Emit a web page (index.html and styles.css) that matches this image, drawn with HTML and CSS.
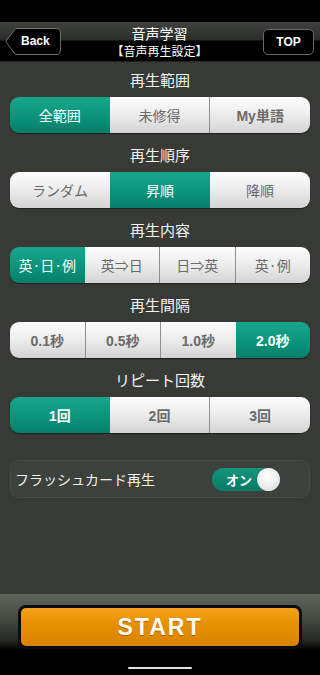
FILE: index.html
```html
<!DOCTYPE html>
<html lang="ja">
<head>
<meta charset="utf-8">
<title>音声学習</title>
<link rel="stylesheet" href="styles.css">
</head>
<body>
<div class="status"></div>
<header class="header">
  <div class="back">
    <svg class="back-shape" width="56" height="27" viewBox="0 0 56 27"><path d="M10.5 0.5 H51 Q55.5 0.5 55.5 5 V22 Q55.5 26.5 51 26.5 H10.5 L0.7 13.5 Z" fill="#000" stroke="#6d706b" stroke-width="1"/></svg>
    <span class="back-label">Back</span>
  </div>
  <div class="title">
    <div class="title-main">音声学習</div>
    <div class="title-sub">【音声再生設定】</div>
  </div>
  <div class="top-wrap"><div class="top">TOP</div></div>
</header>
<main class="main">
  <div class="label first">再生範囲</div>
  <div class="seg">
    <div class="opt on">全範囲</div>
    <div class="opt">未修得</div>
    <div class="opt num">My単語</div>
  </div>
  <div class="label">再生順序</div>
  <div class="seg">
    <div class="opt">ランダム</div>
    <div class="opt on">昇順</div>
    <div class="opt">降順</div>
  </div>
  <div class="label">再生内容</div>
  <div class="seg">
    <div class="opt on">英·日·例</div>
    <div class="opt">英⇒日</div>
    <div class="opt">日⇒英</div>
    <div class="opt">英·例</div>
  </div>
  <div class="label">再生間隔</div>
  <div class="seg">
    <div class="opt num">0.1秒</div>
    <div class="opt num">0.5秒</div>
    <div class="opt num">1.0秒</div>
    <div class="opt num on">2.0秒</div>
  </div>
  <div class="label">リピート回数</div>
  <div class="seg">
    <div class="opt num on">1回</div>
    <div class="opt num">2回</div>
    <div class="opt num">3回</div>
  </div>
  <div class="flash">
    <span class="flash-label">フラッシュカード再生</span>
    <div class="toggle"><span class="toggle-text">オン</span><span class="knob"></span></div>
  </div>
</main>
<footer class="footer">
  <div class="start">START</div>
  <div class="home"></div>
</footer>
</body>
</html>
```
FILE: styles.css
```css
html, body {
  margin: 0;
  padding: 0;
}
body {
  width: 320px;
  height: 675px;
  background: #373a35;
  display: flex;
  flex-direction: column;
  font-family: "Noto Sans CJK JP", "Noto Sans", sans-serif;
  overflow: hidden;
}
.status {
  height: 22px;
  background: #000;
  flex: none;
}
.header {
  flex: none;
  height: 39px;
  background: linear-gradient(to bottom, #3e413c 0, #2b2d29 18px, #000 19px, #000 100%);
  border-bottom: 1px solid #222;
  display: grid;
  grid-template-columns: 1fr auto 1fr;
  align-items: center;
  padding: 0 6px 0 5px;
}
.back {
  position: relative;
  width: 56px;
  height: 27px;
}
.back-shape {
  position: absolute;
  left: 0;
  top: 0;
}
.back-label {
  position: relative;
  display: block;
  line-height: 27px;
  padding-left: 16px;
  font-family: "Liberation Sans", sans-serif;
  font-weight: bold;
  font-size: 12px;
  color: #fff;
}
.title {
  text-align: center;
  color: #fff;
}
.title-main {
  font-size: 14px;
  line-height: 17px;
}
.title-sub {
  font-size: 12px;
  line-height: 17px;
}
.top-wrap {
  display: flex;
  justify-content: flex-end;
}
.top {
  width: 49px;
  height: 24px;
  border: 1px solid #666964;
  border-radius: 5px;
  background: #000;
  color: #fff;
  font-family: "Liberation Sans", sans-serif;
  font-weight: bold;
  font-size: 12px;
  line-height: 24px;
  text-align: center;
}
.main {
  flex: 1;
  padding: 0 10px;
}
.label {
  margin: 11px 0 6px;
  height: 22px;
  line-height: 22px;
  font-size: 15px;
  color: #f2f2f2;
  text-align: center;
}
.label.first {
  margin-top: 7px;
}
.seg {
  display: flex;
  height: 36px;
  border-radius: 9px;
  overflow: hidden;
  box-shadow: 0 1px 1px rgba(0, 0, 0, 0.45);
}
.opt {
  flex: 1;
  display: flex;
  align-items: center;
  justify-content: center;
  background: linear-gradient(to bottom, #fdfdfd 0%, #ececec 50%, #d3d3d3 100%);
  color: #6a6a6a;
  font-size: 14px;
  border-left: 1px solid #8f8f8f;
}
.opt:first-child {
  border-left: none;
}
.opt.num {
  font-family: "Liberation Sans", "Noto Sans CJK JP", sans-serif;
  font-weight: bold;
}
.opt.on {
  background: linear-gradient(to bottom, #1aa68d 0%, #0b957d 50%, #067f69 100%);
  color: #fff;
  border-left: none;
}
.opt.on + .opt {
  border-left: none;
}
.flash {
  margin-top: 27px;
  height: 36px;
  border: 1px solid #474b45;
  border-radius: 9px;
  background: #3d413b;
  display: flex;
  align-items: center;
  justify-content: space-between;
  padding: 0 29px 0 4px;
}
.flash-label {
  font-size: 14px;
  color: #f0f0f0;
}
.toggle {
  position: relative;
  width: 68px;
  height: 23px;
  border-radius: 12px;
  background: linear-gradient(to bottom, #14967c, #077a64);
  box-sizing: border-box;
}
.toggle-text {
  display: block;
  line-height: 23px;
  padding-left: 14px;
  color: #fff;
  font-size: 13px;
  font-weight: bold;
}
.knob {
  position: absolute;
  right: 0;
  top: 0;
  width: 23px;
  height: 23px;
  border-radius: 50%;
  background: radial-gradient(circle at 45% 35%, #ffffff 0%, #ececec 55%, #cfcfcf 100%);
  box-shadow: 0 0 1px rgba(0, 0, 0, 0.5);
}
.footer {
  flex: none;
  height: 81px;
  background: linear-gradient(to bottom, #5e645c 0, #464b44 24px, #262925 46px, #000 56px, #000 100%);
  display: flex;
  flex-direction: column;
  align-items: center;
}
.start {
  margin-top: 11px;
  width: 278px;
  height: 38px;
  border: 3px solid #0c0c0c;
  border-radius: 8px;
  background: linear-gradient(to bottom, #f2a21a 0%, #e69000 45%, #d88300 100%);
  color: #fffbf2;
  font-family: "Liberation Sans", sans-serif;
  font-weight: bold;
  font-size: 23px;
  letter-spacing: 2px;
  line-height: 38px;
  text-align: center;
  text-shadow: 0 1px 1px rgba(120, 60, 0, 0.5);
}
.home {
  margin-top: 18px;
  width: 64px;
  height: 2px;
  border-radius: 1px;
  background: #e0e0e0;
}
```
